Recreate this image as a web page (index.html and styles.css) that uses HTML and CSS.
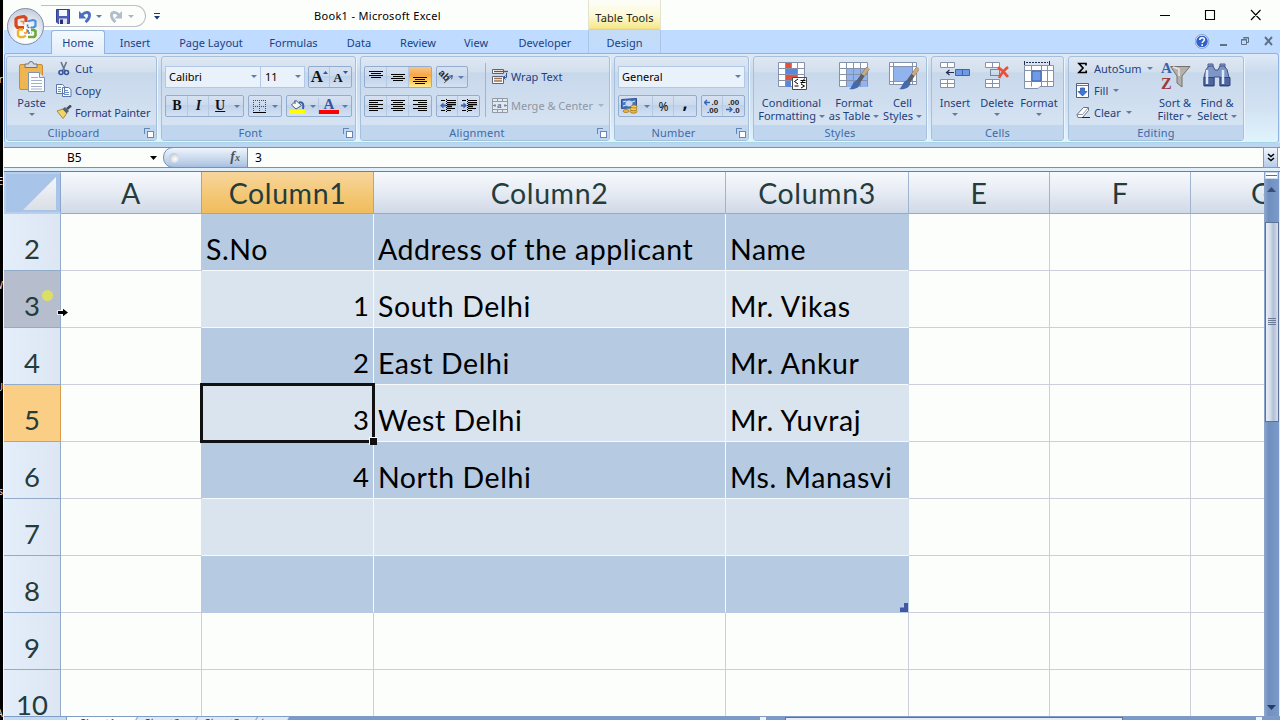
FILE: index.html
```html
<!DOCTYPE html>
<html lang="en">
<head>
    <meta charset="UTF-8">
    <meta name="viewport" content="width=device-width, initial-scale=1.0">
    <title>Book1 - Microsoft Excel</title>
    <link rel="stylesheet" href="styles.css">
</head>
<body>
    <!-- strip of the desktop behind the window -->
    <div class="desktop">
        <span class="d1">or</span><span class="d2">E</span><span class="d3">W</span><span class="d4">U</span><span class="d5">s</span><span class="d6">A</span>
    </div>
    <div class="window">
        <header class="titlebar">
            <div class="quick-access">
                <svg width="14" height="15" viewBox="0 0 14 15"><path d="M.5 .5h13v14H2L.5 13z" fill="#4e5bb5" stroke="#34408e"/><path d="M3 1h8v6H3z" fill="#f4f7ff"/><path d="M3 9.500h8V15H3z" fill="#dfe3f0"/><path d="M4 10.500h3V15H4z" fill="#27306e"/></svg>
                <svg class="undo" width="14" height="13" viewBox="0 0 14 13"><path d="M4 5C8 1 12 2 11.500 6c-.3 3-2 4.500-4 6" fill="none" stroke="#4a6fc0" stroke-width="2.800"/><path d="M1 1v7.500H8.500z" fill="#4a6fc0"/></svg>
                <i class="arrow"></i>
                <svg class="redo" width="14" height="13" viewBox="0 0 14 13"><path d="M10 5C6 1 2 2 2.500 6c.3 3 2 4.500 4 6" fill="none" stroke="#b3bccb" stroke-width="2.800"/><path d="M13 1v7.500H5.500z" fill="#b3bccb"/></svg>
                <i class="arrow pale"></i>
            </div>
            <svg class="customize" width="6" height="7" viewBox="0 0 6 7"><path d="M0 .5h6" stroke="#1d3a73"/><path d="M0 3h6L3 6.500z" fill="#1d3a73"/></svg>
            <h1>Book1 - Microsoft Excel</h1>
            <div class="context-title">Table Tools</div>
            <div class="window-buttons">
                <svg width="101" height="12" viewBox="0 0 101 12"><path d="M0 6.500h10M45.500 1.500h9v9h-9zM91 1l9.500 10M100.500 1L91 11" fill="none" stroke="#000" stroke-width="1.100"/></svg>
            </div>
        </header>
        <div class="office-button">
            <svg width="24" height="24" viewBox="0 0 24 24" fill="none" stroke-linejoin="round">
                <path d="M10 12.500H3.500L2 10.500V4l2-1.500L10 1.500l2 1.500v4" stroke="#d9471c" stroke-width="3.200"/>
                <path d="M15 7V6l4-1 2.500 1v5l-2 1.500H17" stroke="#4a93dc" stroke-width="2.200"/>
                <path d="M9 14.500H5.500L4 16v4.500L5.500 22h4L12 20.500" stroke="#f0b32c" stroke-width="2.400"/>
                <path d="M14 22h6l1.500-1.500V16l-2-1H17" stroke="#6bab3c" stroke-width="2.600"/>
                <path d="M6.500 6.500h3v3M10 18h3v-4" stroke="#f0902c" stroke-width="1.600"/>
                <path d="M13.500 9.500v3h4M14 15v3h3.500" stroke="#3f78c4" stroke-width="1.600" stroke-dasharray="2 1"/>
            </svg>
        </div>

        <nav class="tabs">
            <a class="tab active t-home">Home</a>
            <a class="tab t-insert">Insert</a>
            <a class="tab t-page">Page Layout</a>
            <a class="tab t-formulas">Formulas</a>
            <a class="tab t-data">Data</a>
            <a class="tab t-review">Review</a>
            <a class="tab t-view">View</a>
            <a class="tab t-dev">Developer</a>
            <a class="tab t-design">Design</a>
            <div class="doc-buttons">
                <svg width="80" height="15" viewBox="0 0 80 15"><circle cx="7" cy="7.500" r="6.300" fill="#2f62cc" stroke="#e9f2ff"/><circle cx="7" cy="7.500" r="6.900" fill="none" stroke="#5577a8" stroke-width=".6"/><path d="M4.800 6c0-3 4.600-3 4.600-.4C9.400 7.300 7.200 7.300 7.200 9M7.200 10.200v1.700" fill="none" stroke="#fff" stroke-width="1.600"/><path d="M25 11h7" stroke="#5f7186" stroke-width="2"/><path d="M48.500 3.500h5v5h-2M46.500 5.500h5v5h-5zM46 6h6M48 4h6" fill="none" stroke="#5f7186"/><path d="M70 3l7 8M77 3l-7 8" stroke="#5f7186" stroke-width="1.900"/></svg>
            </div>
        </nav>

        <section class="ribbon">
            <div class="group g-clipboard">
                <div class="group-body">
                    <div class="big paste">
                        <svg width="28" height="31" viewBox="0 0 28 31"><rect x="1.500" y="3.500" width="23" height="25" rx="1.500" fill="#eeb550" stroke="#c68d35"/><path d="M7 6.500V3h3.500a2.500 2.500 0 0 1 5 0H19v3.500z" fill="#d8dce2" stroke="#6d7580"/><path d="M10.500 11.500h11l5 5v14h-16z" fill="#fff" stroke="#7f94b4"/><path d="M21.500 11.500v5h5" fill="#dfe8f4" stroke="#7f94b4"/><path d="M13 16.500h7M13 19.500h11M13 22.500h11M13 25.500h11M13 28h11" stroke="#9fb0c8"/></svg>
                        <span>Paste</span>
                        <i class="arrow"></i>
                    </div>
                    <div class="stack">
                        <div class="item"><svg width="16" height="15" viewBox="0 0 16 15"><path d="M5 1l4 9M10.500 1L6.500 10" stroke="#66758c" stroke-width="1.600"/><circle cx="5" cy="11.500" r="2" fill="none" stroke="#35549b" stroke-width="1.600"/><circle cx="10.500" cy="11.500" r="2" fill="none" stroke="#35549b" stroke-width="1.600"/></svg><span>Cut</span></div>
                        <div class="item"><svg width="16" height="14" viewBox="0 0 16 14"><path d="M.5 1.500h6l2 2v7h-8zM6.500 4.500h6l2.500 2v7H6.500z" fill="#f8fbff" stroke="#5876a6"/><path d="M2 4.500h3M2 6.500h3M2 8.500h3M8 7.500h4M8 9.500h5M8 11.500h5" stroke="#6c8fc7"/></svg><span>Copy</span></div>
                        <div class="item painter"><svg width="16" height="14" viewBox="0 0 16 14"><path d="M1 6l6-2 4 4-4 5.500z" fill="#f0d469" stroke="#a98a35"/><path d="M6.500 4L9 2l4 4-2.500 2.500z" fill="#59606c"/><path d="M11 4l4-3.500" stroke="#434a57" stroke-width="2.500"/></svg><span>Format Painter</span></div>
                    </div>
                </div>
                <div class="group-label">Clipboard<i class="launcher"></i></div>
            </div>

            <div class="group g-font">
                <div class="group-body lines">
                    <div class="line">
                        <div class="combo font-name">Calibri<i class="arrow"></i></div>
                        <div class="combo font-size">11<i class="arrow"></i></div>
                        <div class="buttons w44 sizes">
                            <b class="serif grow">A<svg width="5" height="3" viewBox="0 0 5 3"><path d="M0 3h5L2.500 0z" fill="#35549b"/></svg></b>
                            <b class="serif shrink">A<svg width="5" height="3" viewBox="0 0 5 3"><path d="M0 0h5L2.500 3z" fill="#35549b"/></svg></b>
                        </div>
                    </div>
                    <div class="line">
                        <div class="buttons w79"><b class="serif">B</b><b class="serif italic">I</b><b class="serif under">U</b><i class="arrow"></i></div>
                        <div class="buttons w34"><b><svg width="13" height="13" viewBox="0 0 13 13"><path d="M.5 0v12M12.500 0v12M6.500 0v12M0 .5h13M0 6.500h13" stroke="#3b4d6b" stroke-dasharray="1 1"/><path d="M0 12.500h13" stroke="#000"/></svg></b><i class="arrow"></i></div>
                        <div class="buttons w66">
                            <b><svg width="16" height="15" viewBox="0 0 16 15"><path d="M7 1.500l5.500 5L7 10 2.500 6z" fill="#f3f6fb" stroke="#4d5b73"/><path d="M6 5V1" stroke="#4d5b73"/><path d="M10 3.500c4-1 5 2 4 6.500" fill="none" stroke="#3b5fa8" stroke-width="2"/><path d="M0 11h16v4H0z" fill="#ff0"/></svg></b><i class="arrow"></i>
                            <b class="font-colour">A</b><i class="arrow"></i>
                        </div>
                    </div>
                </div>
                <div class="group-label">Font<i class="launcher"></i></div>
            </div>

            <div class="group g-align">
                <div class="group-body">
                    <div class="lines">
                        <div class="line">
                            <div class="buttons w68">
                                <b><svg width="15" height="18" viewBox="0 0 15 18"><path d="M0 3.500h14M2 5.500h10M0 7.500h14M2 9.500h10" stroke="#000"/></svg></b>
                                <b><svg width="15" height="18" viewBox="0 0 15 18"><path d="M0 6.500h14M2 8.500h10M0 10.500h14M2 12.500h10" stroke="#000"/></svg></b>
                                <b class="on"><svg width="15" height="18" viewBox="0 0 15 18"><path d="M0 9.500h14M2 11.500h10M0 13.500h14M2 15.500h10" stroke="#000"/></svg></b>
                            </div>
                            <div class="buttons w32"><b><svg width="16" height="16" viewBox="0 0 16 16"><text x="-1" y="9" class="orient" transform="rotate(45 5 8)">ab</text><path d="M6 14l8-7M14.500 6.500l-4 .8M14.500 6.500l-1 3.800" stroke="#4c5768" fill="none"/></svg></b><i class="arrow"></i></div>
                        </div>
                        <div class="line">
                            <div class="buttons w68">
                                <b><svg width="14" height="12" viewBox="0 0 14 12"><path d="M0 .5h14M0 2.500h9M0 4.500h14M0 6.500h9M0 8.500h14M0 10.500h9" stroke="#000"/></svg></b>
                                <b><svg width="14" height="12" viewBox="0 0 14 12"><path d="M0 .5h14M2 2.500h10M0 4.500h14M2 6.500h10M0 8.500h14M2 10.500h10" stroke="#000"/></svg></b>
                                <b><svg width="14" height="12" viewBox="0 0 14 12"><path d="M0 .5h14M5 2.500h9M0 4.500h14M5 6.500h9M0 8.500h14M5 10.500h9" stroke="#000"/></svg></b>
                            </div>
                            <div class="buttons w44">
                                <b><svg width="16" height="14" viewBox="0 0 16 14"><path d="M1 1.500h4M7 1.500h9M7 9.500h8M1 11.500h4M7 11.500h4M7 3.500h9" stroke="#000"/><path d="M7 5.500h9M7 7.500h5" stroke="#000" stroke-width="1.400"/><path d="M6.500 0v14" stroke="#000" stroke-dasharray="1 1"/><path d="M0 6.500l3.500-3v2H6v2H3.500v2z" fill="#3565b5"/></svg></b>
                                <b><svg width="16" height="14" viewBox="0 0 16 14"><path d="M1 1.500h4M7 1.500h9M7 9.500h8M1 11.500h4M7 11.500h4M7 3.500h9" stroke="#000"/><path d="M7 5.500h9M7 7.500h5" stroke="#000" stroke-width="1.400"/><path d="M6.500 0v14" stroke="#000" stroke-dasharray="1 1"/><path d="M6 6.500l-3.500-3v2H0v2h2.500v2z" fill="#3565b5"/></svg></b>
                            </div>
                        </div>
                    </div>
                    <div class="rule"></div>
                    <div class="stack wide">
                        <div class="item"><svg width="16" height="16" viewBox="0 0 16 16"><path d="M.5 1.500h11v4H.5zM.5 8.500h11v7H.5z" fill="#fff" stroke="#56657d"/><path d="M2 3.500h14" stroke="#7b5236" stroke-width="1.400"/><path d="M2 10.500h8M2 13h8" stroke="#a06d48" stroke-width="1.400"/><path d="M14.500 5v4.500h-3M13.500 7.500l-2 2 2 2" stroke="#35549b" fill="none"/></svg><span>Wrap Text</span></div>
                        <div class="item disabled"><svg width="16" height="15" viewBox="0 0 16 15"><path d="M.5 .5h15v14H.5zM0 3.500h16M0 11.500h16M5.500 0v3M10.500 0v3M5.500 12v3M10.500 12v3" fill="#e3e9f1" stroke="#929aa6"/><path d="M1 7.500h3M12 7.500h3M3 6v3M13 6v3" stroke="#7e8794"/><text x="5" y="10" class="merge-a">a</text></svg><span>Merge &amp; Center</span><i class="arrow pale"></i></div>
                    </div>
                </div>
                <div class="group-label">Alignment<i class="launcher"></i></div>
            </div>

            <div class="group g-number">
                <div class="group-body lines">
                    <div class="line"><div class="combo number-format">General<i class="arrow"></i></div></div>
                    <div class="line">
                        <div class="buttons w79">
                            <b><svg width="17" height="16" viewBox="0 0 17 16"><path d="M.5 1.500l15-1v9l-15 1z" fill="#4a74bd" stroke="#2f4f91"/><ellipse cx="8" cy="5.500" rx="3.500" ry="3" fill="#c6d8f3"/><path d="M2 4l3-1M2 8l3-1M11 4l3-1" stroke="#dce8fa"/><ellipse cx="12.500" cy="13.500" rx="3.500" ry="1.700" fill="#efb836" stroke="#9b6e17" stroke-width=".7"/><ellipse cx="12.500" cy="11" rx="3.500" ry="1.700" fill="#f7cf56" stroke="#9b6e17" stroke-width=".7"/><ellipse cx="5" cy="13" rx="3" ry="1.500" fill="#efb836" stroke="#9b6e17" stroke-width=".7"/><ellipse cx="13" cy="8.500" rx="3" ry="1.500" fill="#f7cf56" stroke="#9b6e17" stroke-width=".7"/></svg></b><i class="arrow"></i><b class="percent">%</b><b class="comma">,</b>
                        </div>
                        <div class="buttons w44">
                            <b><svg width="17" height="14" viewBox="0 0 17 14"><text x="7.500" y="6" class="dec">.0</text><text x="3" y="13.500" class="dec">.00</text><path d="M0 3.500h6M3 1L.5 3.500 3 6" fill="none" stroke="#3565b5" stroke-width="1.300"/></svg></b>
                            <b><svg width="17" height="14" viewBox="0 0 17 14"><text x="3" y="6" class="dec">.00</text><text x="8" y="13.500" class="dec">.0</text><path d="M1 10.500h6M4.500 8L7 10.500 4.500 13" fill="none" stroke="#3565b5" stroke-width="1.300"/></svg></b>
                        </div>
                    </div>
                </div>
                <div class="group-label">Number<i class="launcher"></i></div>
            </div>

            <div class="group g-styles">
                <div class="group-body">
                    <div class="big conditional">
                        <svg width="32" height="30" viewBox="0 0 32 30"><path d="M2.500 1.500h26v24h-26z" fill="#fff" stroke="#8493ab"/><path d="M9 2h7v6H9zM9 14h12v6H9z" fill="#e2503f"/><path d="M9 8h12v6H9zM9 20h6v6H9z" fill="#5a86dc"/><path d="M3 7.500h25M3 13.500h25M3 19.500h25M9.500 2v24M15.500 2v6M21.500 2v24" stroke="#8493ab"/><path d="M16.500 16.500h14v12h-14z" fill="#fff" stroke="#4a4a4a"/><path d="M22 18l-3.500 2.500L22 23M18.500 25h4M24.500 19.500h5M24.500 21.500h5M28.500 17.500l-3 5M25 23l3.500 2-3.500 2" stroke="#000" fill="none"/></svg>
                        <span>Conditional<br>Formatting <i class="arrow"></i></span>
                    </div>
                    <div class="big as-table">
                        <svg width="32" height="30" viewBox="0 0 32 30"><path d="M1.500 1.500h28v24h-28z" fill="#fff" stroke="#8493ab"/><path d="M8 8h21v18H8z" fill="#92b4ee"/><path d="M2 7.500h27M2 13.500h27M2 19.500h27M8.500 2v24M15.500 2v24M22.500 2v24" stroke="#8493ab"/><path d="M30 7L20 21" stroke="#59606c" stroke-width="4"/><path d="M30 7L25 14" stroke="#c9a983" stroke-width="3.600"/><path d="M11 28c3-1 3-7 8-9l3.500 3c-1 5-6 7-11.500 6z" fill="#4669ad"/></svg>
                        <span>Format<br>as Table <i class="arrow"></i></span>
                    </div>
                    <div class="big cell-styles">
                        <svg width="32" height="30" viewBox="0 0 32 30"><path d="M2.500 1.500h27v22h-27z" fill="#fff" stroke="#8493ab"/><path d="M7 6h18v14H7z" fill="#92b4ee"/><path d="M2 5.500h27M2 20.500h27M6.500 2v22M25.500 2v22" stroke="#8493ab"/><path d="M31 7L21 21" stroke="#59606c" stroke-width="4"/><path d="M31 7L26 14" stroke="#c9a983" stroke-width="3.600"/><path d="M12 28c3-1 3-7 8-9l3.500 3c-1 5-6 7-11.500 6z" fill="#4669ad"/></svg>
                        <span>Cell<br>Styles <i class="arrow"></i></span>
                    </div>
                </div>
                <div class="group-label">Styles</div>
            </div>

            <div class="group g-cells">
                <div class="group-body">
                    <div class="big">
                        <svg width="32" height="30" viewBox="0 0 32 30"><path d="M1.500 1.500h14v5h-14zM8.500 1.500v5M1.500 18.500h14v8h-14zM8.500 18.500v8M1.500 22.500h14" fill="#fff" stroke="#8493ab"/><path d="M16.500 8.500h14v6h-14z" fill="#6f9ae6" stroke="#3d64b0"/><path d="M23.500 8.500v6" stroke="#3d64b0"/><path d="M7.500 11.500H15M10.500 9l-3 2.500 3 2.500" fill="none" stroke="#1f2f4d" stroke-width="1.200"/></svg>
                        <span>Insert</span>
                        <i class="arrow"></i>
                    </div>
                    <div class="big">
                        <svg width="32" height="30" viewBox="0 0 32 30"><path d="M4.500 1.500h14v5h-14zM11.500 1.500v5M4.500 18.500h14v8h-14zM11.500 18.500v8M4.500 22.500h14" fill="#fff" stroke="#8493ab"/><path d="M9.500 8.500h9v6h-9z" fill="none" stroke="#1f2f4d" stroke-dasharray="1 1"/><path d="M17 6.500c4 2 7 6 10 9.500M27 6c-4 3-7 7-9 11" stroke="#ea4f38" stroke-width="2.600" fill="none"/></svg>
                        <span>Delete</span>
                        <i class="arrow"></i>
                    </div>
                    <div class="big">
                        <svg width="32" height="30" viewBox="0 0 32 30"><path d="M1.500 4.500h29v21H17l-2 2H1.500z" fill="#fff" stroke="#8493ab"/><path d="M1.500 9.500h29M1.500 20.500h29M8.500 4.500v21M18.500 4.500v21M24.500 4.500v21" stroke="#8493ab"/><path d="M9 10h9v10H9z" fill="#6f9ae6" stroke="#3d64b0"/><path d="M1.500 0v4M26.500 0v4" stroke="#1f2f4d"/><path d="M3 1.500h22" stroke="#1f2f4d" stroke-dasharray="2 1"/></svg>
                        <span>Format</span>
                        <i class="arrow"></i>
                    </div>
                </div>
                <div class="group-label">Cells</div>
            </div>

            <div class="group g-editing">
                <div class="group-body">
                    <div class="stack">
                        <div class="item"><svg width="14" height="12" viewBox="0 0 14 12"><path d="M10 3.500V1.500H3l4 4.500-4 4.500h7.200V8.500" fill="none" stroke="#000" stroke-width="1.700"/></svg><span>AutoSum</span><i class="arrow"></i></div>
                        <div class="item"><svg width="14" height="15" viewBox="0 0 14 15"><path d="M.5 .5h12v14H.5z" fill="#fff" stroke="#4a6287"/><path d="M1 2.500h11" stroke="#5f7ba8"/><path d="M4.500 5h4v3.500H11L6.500 13 2 8.500h2.500z" fill="#3e78dd" stroke="#224f9f" stroke-width=".7"/></svg><span>Fill</span><i class="arrow"></i></div>
                        <div class="item"><svg width="14" height="14" viewBox="0 0 14 14"><path d="M1 9.500l6.500-7h5v3l-6 7H2z" fill="#fff" stroke="#66718a"/><path d="M1 9.500h5.500l6-7" fill="none" stroke="#8a94a8"/><path d="M6 12.500h8" stroke="#1d2533"/></svg><span>Clear</span><i class="arrow"></i></div>
                    </div>
                    <div class="big sort">
                        <svg width="32" height="30" viewBox="0 0 32 30"><path d="M11.500 5.500H31L23 15v11l-5-4v-7z" fill="#b4b0ab" stroke="#77716b"/><path d="M20 15V8l-6-2" stroke="#e9e7e4" stroke-width="1.500" fill="none"/><text x="2" y="12" class="sort-a">A</text><text x="2" y="28" class="sort-z">Z</text></svg>
                        <span>Sort &amp;<br>Filter <i class="arrow"></i></span>
                    </div>
                    <div class="big find">
                        <svg width="32" height="30" viewBox="0 0 32 30"><path d="M7 3h5v4H7zM19 3h5v4h-5z" fill="#8ea3cc" stroke="#4c5f8f"/><path d="M5 8.500L8 5h4l2 4h3l2-4h4l3 3.500 2 8v8.500H19v-9h-6v9H3v-9z" fill="#7d95c7" stroke="#41547f"/><path d="M3 16.500h10v8H3zM19 16.500h10v8H19z" fill="#4c66a3" stroke="#34456f"/><path d="M6 9v14M22 9v14" stroke="#dfe8f8" stroke-width="2.500"/></svg>
                        <span>Find &amp;<br>Select <i class="arrow"></i></span>
                    </div>
                </div>
                <div class="group-label">Editing</div>
            </div>
        </section>

        <section class="formula-bar">
            <div class="name-box"><span>B5</span><svg width="7" height="4" viewBox="0 0 7 4"><path d="M0 0h7L3.500 4z"/></svg></div>
            <div class="fx"><i class="knob"></i><em>f<small>x</small></em></div>
            <div class="formula">3</div>
            <div class="expand"><svg width="8" height="9" viewBox="0 0 8 9"><path d="M1 1l3 2.500L7 1M1 5l3 2.500L7 5" fill="none" stroke="#000" stroke-width="1.500"/></svg></div>
        </section>

        <main class="sheet">
            <div class="grid">
                <div class="corner"></div>
                <div class="col">A</div><div class="col selected">Column1</div><div class="col">Column2</div><div class="col">Column3</div><div class="col">E</div><div class="col">F</div><div class="col last">G</div>

                <div class="row-no">2</div>
                <div class="cell"></div><div class="cell dark">S.No</div><div class="cell dark">Address of the applicant</div><div class="cell dark">Name</div><div class="cell"></div><div class="cell"></div><div class="cell last"></div>

                <div class="row-no hover">3<i class="click-spot"></i></div>
                <div class="cell">
                    <svg class="cursor" width="12" height="9" viewBox="0 0 12 9"><path d="M1 3h5V.8L11 4.500 6 8.200V6H1z" stroke="#fff" stroke-width="1.500"/><path d="M1 3h5V.8L11 4.500 6 8.200V6H1z"/></svg>
                </div><div class="cell light num">1</div><div class="cell light">South Delhi</div><div class="cell light">Mr. Vikas</div><div class="cell"></div><div class="cell"></div><div class="cell last"></div>

                <div class="row-no">4</div>
                <div class="cell"></div><div class="cell dark num">2</div><div class="cell dark">East Delhi</div><div class="cell dark">Mr. Ankur</div><div class="cell"></div><div class="cell"></div><div class="cell last"></div>

                <div class="row-no selected">5</div>
                <div class="cell"></div><div class="cell light num current">3</div><div class="cell light">West Delhi</div><div class="cell light">Mr. Yuvraj</div><div class="cell"></div><div class="cell"></div><div class="cell last"></div>

                <div class="row-no">6</div>
                <div class="cell"></div><div class="cell dark num">4</div><div class="cell dark">North Delhi</div><div class="cell dark">Ms. Manasvi</div><div class="cell"></div><div class="cell"></div><div class="cell last"></div>

                <div class="row-no">7</div>
                <div class="cell"></div><div class="cell light"></div><div class="cell light"></div><div class="cell light"></div><div class="cell"></div><div class="cell"></div><div class="cell last"></div>

                <div class="row-no">8</div>
                <div class="cell"></div><div class="cell dark end"></div><div class="cell dark end"></div><div class="cell dark end table-end"></div><div class="cell"></div><div class="cell"></div><div class="cell last"></div>

                <div class="row-no">9</div>
                <div class="cell"></div><div class="cell"></div><div class="cell"></div><div class="cell"></div><div class="cell"></div><div class="cell"></div><div class="cell last"></div>

                <div class="row-no">10</div>
                <div class="cell"></div><div class="cell"></div><div class="cell"></div><div class="cell"></div><div class="cell"></div><div class="cell"></div><div class="cell last"></div>
            </div>
            <div class="vscroll">
                <div class="split"></div>
                <svg width="9" height="5" viewBox="0 0 9 5"><path d="M0 5h9L4.500 0z" fill="#3b4d78"/></svg>
                <div class="thumb"><i></i></div>
                <svg width="9" height="5" viewBox="0 0 9 5"><path d="M0 0h9L4.500 5z" fill="#263b66"/></svg>
            </div>
        </main>

        <footer class="sheet-tabs">
            <div class="tab-nav"></div>
            <div class="sheet-tab current-tab">Sheet1</div>
            <div class="sheet-tab">Sheet2</div>
            <div class="sheet-tab">Sheet3</div>
            <div class="sheet-tab new-tab">*</div>
            <div class="hscroll"><i class="grip"></i><div class="hthumb"></div><i class="grip"></i></div>
        </footer>
    </div>
</body>
</html>
```
FILE: styles.css
```css
* {
    box-sizing: border-box;
}

body {
    margin: 0;
    width: 1280px;
    height: 720px;
    overflow: hidden;
    display: flex;
    background: #000;
    font-family: "Noto Sans", "Open Sans", sans-serif;
    font-size: 11px;
    color: #1e3f7d;
}

svg {
    display: block;
    flex: none;
}

h1 {
    margin: 0;
}

/* Desktop strip */
.desktop {
    position: relative;
    width: 3px;
    height: 720px;
    flex: none;
    overflow: hidden;
    color: #ddd;
    font-size: 10px;
}

.desktop span {
    position: absolute;
    right: 0;
}

.d1 { top: 72px; }
.d2 { top: 174px; }
.d3 { top: 278px; }
.d4 { top: 380px; }
.d5 { top: 484px; }
.d6 { top: 706px; }

.window {
    position: relative;
    width: 1277px;
    height: 720px;
    flex: none;
    display: flex;
    flex-direction: column;
    overflow: hidden;
    background: #dcebfb;
    border-left: 1px solid #f4f9fd;
}

/* Title bar */
.titlebar {
    height: 30px;
    flex: none;
    display: flex;
    align-items: flex-start;
    background: #fcfefc;
}

.quick-access {
    display: flex;
    align-items: center;
    width: 105px;
    height: 22px;
    margin: 5px 0 0 37px;
    padding-left: 15px;
    border: 1px solid #b9c0c8;
    border-left: none;
    border-radius: 0 11px 11px 0;
}

.undo {
    margin: 0 4px 0 8px;
}

.redo {
    margin: 0 5px 0 7px;
}

.customize {
    margin: 13px 0 0 8px;
}

.titlebar h1 {
    width: 200px;
    margin: 8px 0 0 106px;
    padding-left: 48px;
    font-size: 11px;
    line-height: 16px;
    font-weight: 400;
    letter-spacing: 0.32px;
    color: #000;
    white-space: nowrap;
}

.context-title {
    width: 73px;
    height: 30px;
    margin-left: 122px;
    padding-top: 10px;
    line-height: 16px;
    letter-spacing: 0.15px;
    text-align: center;
    white-space: nowrap;
    color: #222;
    background: linear-gradient(#fdfefa, #fcf9d8 50%, #f7e98f 92%, #edcf66);
    border: solid #e4e3d0;
    border-width: 0 1px;
}

.window-buttons {
    margin: 9px 0 0 499px;
}

.office-button {
    position: absolute;
    left: 3px;
    top: 8px;
    z-index: 2;
    display: flex;
    align-items: center;
    justify-content: center;
    width: 37px;
    height: 37px;
    border: 1px solid #7f8fa6;
    border-radius: 50%;
    background: radial-gradient(circle at 50% 75%, #fff 20%, #dbe1ea 60%, #b6bfcd);
}

/* Tabs */
.tabs {
    position: relative;
    height: 23px;
    flex: none;
    display: flex;
    padding-left: 47px;
    background: #bfdbff;
}

.tab {
    height: 23px;
    line-height: 25px;
    text-align: center;
    white-space: nowrap;
    color: #1b3f86;
}

.tab.active {
    height: 24px;
    border: 1px solid #95b4da;
    border-bottom: none;
    border-radius: 3px 3px 0 0;
    background: linear-gradient(#f4f9ff, #e2edf9);
    line-height: 23px;
    z-index: 1;
}

.t-home { width: 54px; }
.t-insert { width: 60px; }
.t-page { width: 92px; }
.t-formulas { width: 73px; }
.t-data { width: 58px; }
.t-review { width: 60px; }
.t-view { width: 56px; }
.t-dev { width: 82px; }

.t-design {
    width: 73px;
    margin-left: 2px;
    border: solid #a9c6ea;
    border-width: 0 1px;
    background: linear-gradient(#c5dcf5, #bfdbff);
}

.doc-buttons {
    margin: 4px 0 0 534px;
}

/* Ribbon */
.ribbon {
    height: 90px;
    flex: none;
    display: flex;
    gap: 4px;
    width: 1275px;
    padding: 2px 0 0 1px;
    border: 1px solid #8db2e3;
    border-bottom-color: #a7d4e6;
    border-radius: 3px;
    background: linear-gradient(#dfeaf6, #c9daee 22%, #d2e1f2 60%, #dff4fd);
}

.group {
    height: 85px;
    flex: none;
    border: 1px solid #a6c0dc;
    border-radius: 3px;
    background: linear-gradient(#dfe8f3, #d3dfee 18%, #c8d8eb 19%, #d9e6f4);
    box-shadow: 1px 1px 0 #ecf5fd;
}

.g-clipboard { width: 151px; }
.g-font { width: 195px; }
.g-align { width: 250px; }
.g-number { width: 135px; }
.g-styles { width: 174px; }
.g-cells { width: 133px; }
.g-editing { width: 176px; }

.group-body {
    height: 68px;
    display: flex;
}

.group-label {
    position: relative;
    height: 15px;
    line-height: 16px;
    text-align: center;
    padding-right: 16px;
    color: #426aa6;
    background: #bfd6ee;
    letter-spacing: 0.2px;
}

.g-styles .group-label,
.g-cells .group-label,
.g-editing .group-label {
    padding-right: 0;
}

.launcher {
    position: absolute;
    right: 6px;
    top: 3px;
    width: 6px;
    height: 6px;
    border: solid #6687b5;
    border-width: 1px 0 0 1px;
}

.launcher::after {
    content: "";
    position: absolute;
    left: 2px;
    top: 2px;
    width: 5px;
    height: 5px;
    border: 1px solid #6687b5;
    background: #fff;
}

.arrow {
    display: inline-block;
    width: 0;
    height: 0;
    flex: none;
    border: solid transparent;
    border-width: 3px 3px 0;
    border-top-color: #5f7ca6;
    vertical-align: 2px;
}

.arrow.pale {
    border-top-color: #a8b4c4;
}

/* Large buttons */
.big {
    width: 42px;
    display: flex;
    flex-direction: column;
    align-items: center;
    padding-top: 4px;
    line-height: 13px;
    text-align: center;
    white-space: nowrap;
}

.big span {
    padding-top: 5px;
}

.big > .arrow {
    margin-top: 4px;
}

.paste {
    width: 49px;
}

.paste span {
    padding-top: 4px;
}

.conditional { width: 75px; }
.as-table { width: 50px; }
.cell-styles { width: 47px; }
.sort { width: 42px; }
.find { width: 42px; }

.g-cells .group-body {
    padding-left: 2px;
}

/* Small buttons */
.stack {
    width: 98px;
}

.item {
    display: flex;
    align-items: center;
    height: 22px;
    white-space: nowrap;
}

.item span {
    margin-left: 3px;
}

.item .arrow {
    margin-left: 5px;
}

.painter {
    letter-spacing: -0.15px;
}

.disabled {
    color: #8f97a3;
}

.g-editing .stack {
    padding-left: 7px;
    width: 85px;
}

.g-editing .item span {
    margin-left: 4px;
}

/* Button lines */
.lines {
    display: flex;
    flex-direction: column;
    gap: 7px;
    padding: 9px 0 0 3px;
}

.line {
    display: flex;
    gap: 4px;
    height: 22px;
}

.combo {
    display: flex;
    align-items: center;
    justify-content: space-between;
    height: 22px;
    padding: 0 3px 1px 3px;
    color: #000;
    background: #e9f1fb;
    border: 1px solid #b1c8e6;
}

.font-name { width: 96px; }

.font-size {
    width: 44px;
    margin-left: -4px;
    padding-left: 4px;
    border-left: none;
}

.sizes {
    margin-left: -1px;
}

.number-format {
    width: 127px;
}

.buttons {
    display: flex;
    align-items: center;
    height: 22px;
    border: 1px solid #93add0;
    border-radius: 2px;
    background: linear-gradient(#d6e2f1, #cbdaee 45%, #bfd1e9 46%, #d3e1f3);
}

.buttons b {
    flex: 1;
    height: 20px;
    display: flex;
    align-items: center;
    justify-content: center;
    color: #111;
    box-shadow: -1px 0 0 #b4c8e2;
}

.buttons b:first-child {
    box-shadow: none;
}

.buttons > .arrow {
    margin: 0 3px;
}

.w32 { width: 32px; }
.w34 { width: 34px; }
.w44 { width: 44px; }
.w66 { width: 66px; }
.w68 { width: 68px; }
.w79 { width: 79px; }

.buttons .on {
    background: linear-gradient(#f9c586, #f5a748 40%, #fbd05e 75%, #fdeb9a);
}

.serif {
    font-family: "Liberation Serif", serif;
    font-size: 14px;
}

.italic { font-style: italic; }
.under { text-decoration: underline; }

.buttons .grow {
    font-size: 17px;
    align-items: flex-start;
}

.buttons .shrink {
    font-size: 13px;
    padding-top: 3px;
    align-items: flex-start;
}

.grow svg { margin-top: 4px; }
.shrink svg { margin-top: 1px; }

.buttons .font-colour {
    height: 16px;
    font-family: "Liberation Serif", serif;
    font-size: 15px;
    line-height: 12px;
    color: #35549b;
    border-bottom: 4px solid #f00;
}

.buttons .percent {
    font-weight: 400;
    font-size: 12px;
}

.buttons .comma {
    font-size: 18px;
    padding-bottom: 8px;
}

.dec {
    font: bold 8px "Liberation Sans", sans-serif;
    fill: #222;
}

.orient {
    font: bold 10px "Liberation Sans", sans-serif;
    fill: #222;
}

.merge-a {
    font: bold 9px "Liberation Serif", serif;
    fill: #6e7580;
}

.sort-a {
    font: bold 15px "Liberation Serif", serif;
    fill: #3a62ac;
}

.sort-z {
    font: bold 16px "Liberation Serif", serif;
    fill: #9c3c41;
}

.rule {
    width: 1px;
    height: 54px;
    margin: 6px 6px 0 5px;
    background: #9cb5d3;
}

.stack.wide {
    width: 115px;
    padding-top: 8px;
}

.wide .item {
    margin-bottom: 7px;
}

/* Formula bar */
.formula-bar {
    height: 28px;
    flex: none;
    display: flex;
    border-top: 4px solid #bcd6ef;
    border-bottom: 3px solid #e1effb;
    background: #fcfefc;
    box-shadow: inset 0 1px 0 #6f93ba, inset 0 -1px 0 #6f93ba;
    color: #000;
}

.name-box {
    width: 159px;
    display: flex;
    align-items: center;
    justify-content: space-between;
    padding: 0 6px 0 63px;
    font-size: 12px;
}

.fx {
    width: 85px;
    height: 21px;
    display: flex;
    align-items: center;
    justify-content: space-between;
    padding: 0 7px 0 5px;
    border: 1px solid #6f93ba;
    border-radius: 10px 0 0 10px;
    background: linear-gradient(#eff5fd, #bccfe8 75%, #a5bfe0);
}

.knob {
    width: 10px;
    height: 10px;
    border-radius: 50%;
    background: radial-gradient(circle at 60% 60%, #fff, #a9b4c4);
}

.fx em {
    font: italic bold 14px/16px "Liberation Serif", serif;
    color: #4b5361;
}

.fx small {
    font-size: 10px;
}

.formula {
    flex: 1;
    padding-left: 7px;
    line-height: 21px;
    font-size: 12px;
}

.expand {
    width: 15px;
    height: 21px;
    margin-right: 2px;
    display: flex;
    align-items: center;
    justify-content: center;
    border: 1px solid #7c9dc5;
    background: linear-gradient(#f0f6fe, #b7cce8);
}

/* Sheet */
.sheet {
    height: 545px;
    flex: none;
    display: flex;
    overflow: hidden;
    border-top: 1px solid #5f83a8;
}

.grid {
    display: grid;
    grid-template-columns: 57px 141px 172px 352px 183px 141px 141px 73px;
    grid-template-rows: 42px repeat(9, 57px);
    font-family: Lato, sans-serif;
    font-size: 28.5px;
    line-height: 32px;
    color: #000;
}

.corner {
    border: 2px solid #b8d0ec;
    border-right: 1px solid #8aa6cc;
    background: #a9c4e9;
    position: relative;
}

.corner::after {
    content: "";
    position: absolute;
    right: 4px;
    bottom: 2px;
    width: 33px;
    height: 33px;
    background: linear-gradient(#f4f6f9, #dadfe6);
    clip-path: polygon(100% 0, 100% 100%, 0 100%);
}

.col {
    padding-top: 5px;
    text-align: center;
    letter-spacing: 0.6px;
    color: #253c3c;
    background: linear-gradient(#f6fafd, #e6ebf3 50%, #d0d9e7);
    border-right: 1px solid #9fb4cf;
    border-bottom: 1px solid #93abcb;
    overflow: hidden;
}

.col.selected {
    background: linear-gradient(#f7d69c, #f3c672 60%, #f0bd5e);
    border-color: #dd9c4c;
    box-shadow: -1px 0 0 #dd9c4c;
}

.col.last {
    padding-left: 60px;
    text-align: left;
    border-right: none;
}

.row-no {
    position: relative;
    padding-top: 19px;
    text-align: center;
    font-size: 27.5px;
    color: #253c3c;
    background: linear-gradient(90deg, #e4eefa, #dde7f4);
    border-right: 1px solid #93abcb;
    border-bottom: 1px solid #93abcb;
}

.row-no.hover {
    background: #b6becd;
}

.row-no.selected {
    background: #fbce85;
    border-color: #dd9c4c;
}

.click-spot {
    position: absolute;
    left: 38px;
    top: 19px;
    width: 11px;
    height: 11px;
    border-radius: 50%;
    background: #dbe063;
}

.cell {
    position: relative;
    padding: 19px 4px 0;
    letter-spacing: 0.55px;
    white-space: nowrap;
    background: #fcfefc;
    border-right: 1px solid #cbd0dc;
    border-bottom: 1px solid #cbd0dc;
}

.cell.last {
    border-right: none;
}

.dark,
.light {
    border-color: #f6fafd;
}

.dark { background: #b6cae2; }
.light { background: #dae4ee; }

/* The table fill runs over the grid lines at its outer edges */
.dark:nth-child(8n + 3) { box-shadow: -1px 0 0 #b6cae2; }
.light:nth-child(8n + 3) { box-shadow: -1px 0 0 #dae4ee; }
.dark:nth-child(8n + 5) { border-right-color: #b6cae2; }
.light:nth-child(8n + 5) { border-right-color: #dae4ee; }

.end {
    border-bottom-color: #b6cae2;
}

.num {
    text-align: right;
    font-size: 27.5px;
    letter-spacing: 0;
}

/* Selection frame and its fill handle */
.current::before {
    content: "";
    position: absolute;
    z-index: 1;
    left: -2px;
    top: -2px;
    right: -2px;
    bottom: -2px;
    border: 3px solid #111;
}

.current::after {
    content: "";
    position: absolute;
    z-index: 2;
    right: -4px;
    bottom: -4px;
    width: 7px;
    height: 7px;
    background: #111;
    border: solid #fff;
    border-width: 1px 0 0 1px;
}

.table-end::after {
    content: "";
    position: absolute;
    right: 0;
    bottom: 0;
    width: 8px;
    height: 9px;
    background: #4358a5;
    clip-path: polygon(50% 0, 100% 0, 100% 100%, 0 100%, 0 50%, 50% 50%);
}

.cursor {
    position: absolute;
    left: -4px;
    top: 37px;
}

.vscroll {
    width: 15px;
    display: flex;
    flex-direction: column;
    align-items: center;
    background: linear-gradient(90deg, #8fa9cc, #6f90c0 30%, #7b9ac9);
}

.vscroll .split {
    width: 13px;
    height: 7px;
    margin-bottom: 8px;
    background: linear-gradient(#fff 2px, #4b6ea5 2px, #4b6ea5 3px, #fff 3px);
    border: 1px solid #c8d9ee;
}

.vscroll .thumb {
    width: 14px;
    height: 200px;
    margin: 30px 0 283px;
    padding: 95px 2px 0;
    border: 1px solid #5d7295;
    background: linear-gradient(90deg, #e8edf7, #d4ddec 35%, #b3bfd5 60%, #d5dced);
}

.vscroll .thumb i {
    display: block;
    height: 8px;
    background: repeating-linear-gradient(#6b7a95 0 1px, transparent 1px 2px);
}

/* Sheet tabs, mostly cut off by the bottom edge */
.sheet-tabs {
    height: 18px;
    flex: none;
    display: flex;
    background: #7b9ac9;
    border-top: 1px solid #7f9dc4;
    line-height: 11px;
}

.tab-nav {
    width: 63px;
    background: #c5d9f1;
    border-right: 1px solid #7f9dc4;
}

.sheet-tab {
    width: 60px;
    padding-left: 8px;
    background: #dfeaf8;
    border-left: 1px solid #7f9dc4;
    transform: skewX(-30deg);
    transform-origin: top left;
}

.current-tab {
    width: 70px;
    padding-left: 13px;
    background: #fcfefc;
    border-left: none;
    transform: none;
}

.new-tab {
    width: 32px;
    padding-left: 3px;
}

.hscroll {
    flex: 1;
    display: flex;
    align-items: flex-start;
    padding-left: 471px;
}

.grip {
    width: 6px;
    height: 10px;
    background: #eef4fb;
}

.hthumb {
    width: 338px;
    height: 14px;
    margin: 0 133px 0 19px;
    background: #e6edf8;
    border: 1px solid #5d7295;
}
```
